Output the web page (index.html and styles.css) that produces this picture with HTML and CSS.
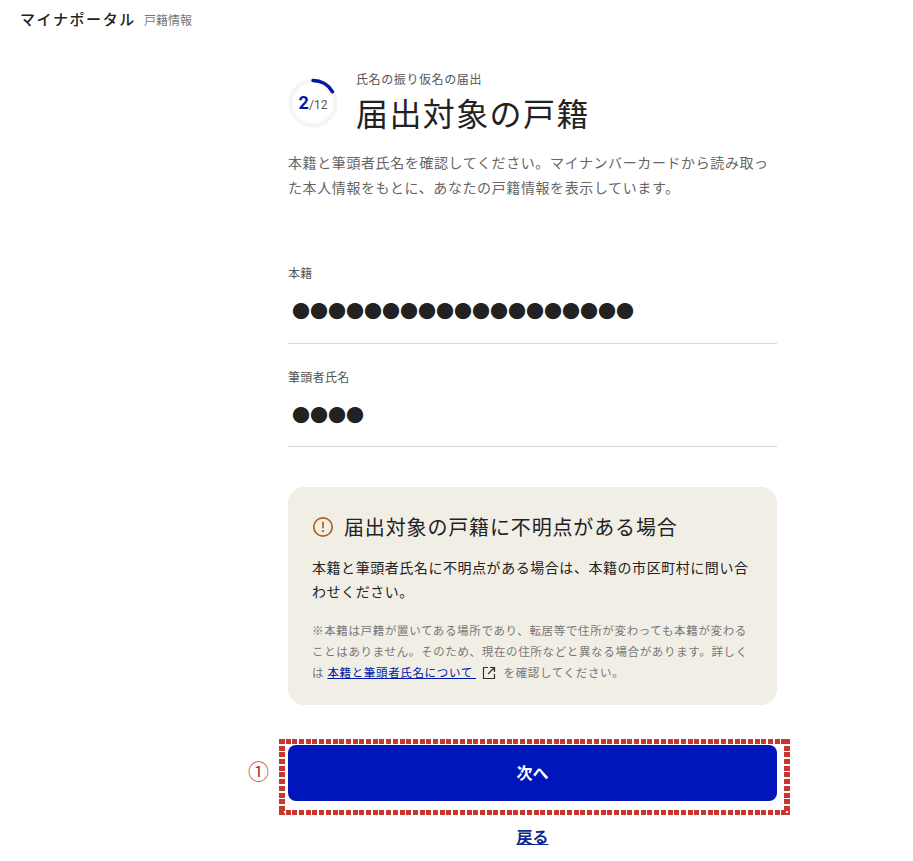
FILE: index.html
```html
<!DOCTYPE html>
<html lang="ja">
<head>
    <meta charset="utf-8">
    <title>戸籍情報</title>
    <link rel="stylesheet" href="styles.css">
</head>
<body>
    <header class="site-header">
        <span class="site-name">マイナポータル</span>
        <span class="site-sub">戸籍情報</span>
    </header>

    <main class="content">
        <div class="page-head">
            <div class="progress">
                <svg class="progress-ring" width="50" height="50" viewBox="0 0 50 50">
                    <circle cx="25" cy="25" r="22.5" fill="none" stroke="#f5f5f5" stroke-width="4"/>
                    <path d="M25 2.5A22.5 22.5 0 0 1 44.5 13.75" fill="none" stroke="#0017a8" stroke-width="3.5" stroke-linecap="round"/>
                </svg>
                <div class="progress-text"><b>2</b>/12</div>
            </div>
            <div class="page-titles">
                <div class="page-kicker">氏名の振り仮名の届出</div>
                <h1 class="page-title">届出対象の戸籍</h1>
            </div>
        </div>

        <p class="lead">本籍と筆頭者氏名を確認してください。マイナンバーカードから読み取った本人情報をもとに、あなたの戸籍情報を表示しています。</p>

        <div class="field field-first">
            <div class="field-label">本籍</div>
            <div class="field-value">●●●●●●●●●●●●●●●●●●●</div>
        </div>
        <div class="field">
            <div class="field-label">筆頭者氏名</div>
            <div class="field-value">●●●●</div>
        </div>

        <section class="notice">
            <h2 class="notice-title">
                <svg class="notice-icon" width="22" height="22" viewBox="0 0 22 22">
                    <circle cx="11" cy="11" r="9.2" fill="none" stroke="#b5601c" stroke-width="1.7"/>
                    <path d="M11 5.8V12.2" stroke="#b5601c" stroke-width="1.7" fill="none"/>
                    <circle cx="11" cy="15.2" r="1.1" fill="#b5601c"/>
                </svg>
                届出対象の戸籍に不明点がある場合
            </h2>
            <p class="notice-body">本籍と筆頭者氏名に不明点がある場合は、本籍の市区町村に問い合わせください。</p>
            <p class="notice-small">※本籍は戸籍が置いてある場所であり、転居等で住所が変わっても本籍が変わることはありません。そのため、現在の住所などと異なる場合があります。詳しくは <a class="notice-link" href="#">本籍と筆頭者氏名について&nbsp;</a>
                <svg class="external-icon" width="14" height="14" viewBox="0 0 14 14">
                    <path d="M6 1.5H1.5V12.5H12.5V8M8 1.5H12.5V6M12.5 1.5L6 8" fill="none" stroke="#333" stroke-width="1.2"/>
                </svg>
                を確認してください。</p>
        </section>

        <div class="actions">
            <span class="step-mark">①</span>
            <div class="highlight">
                <button class="btn-next">次へ</button>
            </div>
        </div>
        <a class="back-link" href="#">戻る</a>
    </main>
</body>
</html>
```

FILE: styles.css
```css
* { box-sizing: border-box; }
body { margin: 0; background: #fff; color: #222; font-family: "Noto Sans CJK JP", "Noto Sans", sans-serif; height: 861px; overflow: hidden; }

.site-header { display: flex; align-items: baseline; gap: 8px; padding: 8px 20px 0; height: 69px; }
.site-name { font-size: 15px; font-weight: 500; letter-spacing: 1.6px; line-height: 22px; }
.site-sub { font-size: 12px; color: #777; }

.content { width: 489px; margin-left: 288px; }

.page-head { display: flex; align-items: flex-start; gap: 18px; }
.progress { position: relative; width: 50px; height: 50px; margin-top: 9px; flex: none; }
.progress-ring { display: block; }
.progress-text { position: absolute; left: 0; right: 0; top: 14px; text-align: center; font-family: Roboto, sans-serif; font-size: 12px; line-height: 22px; color: #555; }
.progress-text b { font-size: 18px; font-weight: 700; color: #0017a8; }
.page-kicker { font-size: 12px; line-height: 18px; color: #555; margin-top: 1px; letter-spacing: 0.6px; }
.page-title { font-size: 32px; font-weight: 400; line-height: 44px; margin: 2px 0 0; letter-spacing: 1.4px; }

.lead { font-size: 14px; line-height: 25px; color: #666; margin: 16px 0 0; letter-spacing: 0.6px; }

.field { border-bottom: 1px solid #d8d8d8; height: 103px; padding-top: 24px; }
.field-first { margin-top: 39px; height: 105px; padding-top: 25px; }
.field-label { font-size: 12px; line-height: 18px; color: #555; letter-spacing: 0.3px; }
.field-value { font-size: 18px; line-height: 26px; margin-top: 15px; padding-left: 4px; color: #222; }

.notice { background: #f1eee6; border-radius: 16px; margin-top: 40px; height: 218px; padding: 22px 24px 0; }
.notice-title { display: flex; align-items: center; gap: 10px; font-size: 20px; font-weight: 400; line-height: 36px; margin: 0; letter-spacing: 0.85px; }
.notice-icon { flex: none; }
.notice-body { font-size: 14px; line-height: 24px; margin: 10px 0 0; letter-spacing: 0.55px; color: #222; }
.notice-small { font-size: 11.5px; line-height: 21px; color: #777; margin: 17px 0 0; letter-spacing: 0.65px; }
.notice-link { color: #0017a8; }
.external-icon { vertical-align: -3px; margin: 0 4px 0 3px; }

.actions { position: relative; margin-top: 34px; }
.step-mark { position: absolute; left: -40px; top: 16px; font-size: 21px; line-height: 30px; color: #c0392b; }
.highlight {
    margin: 0 -13px 0 -9px;
    padding: 6px 13px 0 9px;
    height: 76px;
    background:
        repeating-linear-gradient(90deg, #c8372d 0 5px, transparent 5px 6.7px) top / 100% 5px no-repeat,
        repeating-linear-gradient(90deg, #c8372d 0 5px, transparent 5px 6.7px) bottom / 100% 5px no-repeat,
        repeating-linear-gradient(180deg, #c8372d 0 5px, transparent 5px 6.7px) left / 6px 100% no-repeat,
        repeating-linear-gradient(180deg, #c8372d 0 5px, transparent 5px 6.7px) right / 6px 100% no-repeat;
}
.btn-next { display: block; width: 489px; height: 56px; border: none; border-radius: 8px; padding: 0 0 3px; background: #0015ba; color: #fff; font-family: inherit; font-size: 16px; font-weight: 700; }

.back-link { display: block; width: max-content; margin: 10px auto 0; font-size: 16px; font-weight: 700; line-height: 22px; color: #0d2a8c; }
```
